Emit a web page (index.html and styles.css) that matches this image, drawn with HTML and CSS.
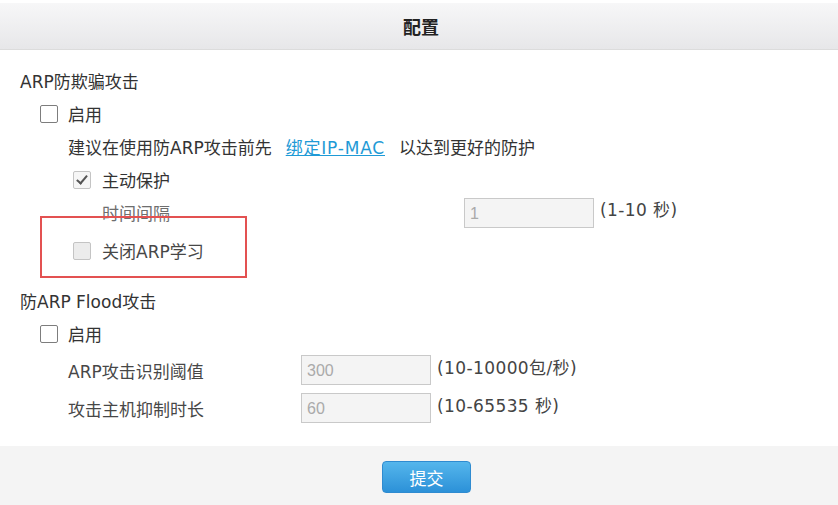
FILE: index.html
```html
<!DOCTYPE html>
<html lang="zh-CN">
<head>
    <meta charset="UTF-8">
    <title>配置</title>
    <link rel="stylesheet" href="styles.css">
</head>
<body>
    <div class="page">
        <div class="header">配置</div>

        <div class="content">
            <div class="row title">ARP防欺骗攻击</div>
            <div class="row lv1">
                <span class="box"></span>
                <span>启用</span>
            </div>
            <div class="row lv1-text">
                建议在使用防ARP攻击前先
                <a class="link" href="#">绑定IP-MAC</a>
                以达到更好的防护
            </div>
            <div class="row lv2">
                <span class="box checked disabled"></span>
                <span>主动保护</span>
            </div>
            <div class="row lv2-text field">
                <span class="label gray w-time">时间间隔</span>
                <input class="input" type="text" value="1" disabled>
                <span class="hint">(1-10 秒)</span>
            </div>
            <div class="row lv2 learn">
                <span class="box disabled"></span>
                <span class="soft">关闭ARP学习</span>
            </div>

            <div class="row title flood">防ARP Flood攻击</div>
            <div class="row lv1">
                <span class="box"></span>
                <span>启用</span>
            </div>
            <div class="row lv1-text field tall first">
                <span class="label soft w-flood">ARP攻击识别阈值</span>
                <input class="input" type="text" value="300" disabled>
                <span class="hint">(10-10000包/秒)</span>
            </div>
            <div class="row lv1-text field tall">
                <span class="label soft w-flood">攻击主机抑制时长</span>
                <input class="input" type="text" value="60" disabled>
                <span class="hint">(10-65535 秒)</span>
            </div>

            <!-- 标注框 -->
            <div class="mark"></div>
        </div>

        <div class="footer">
            <button class="btn" type="button">提交</button>
        </div>
    </div>
</body>
</html>
```

FILE: styles.css
```css
body {
    margin: 0;
    font-family: "DejaVu Sans", "Noto Sans CJK SC", sans-serif;
    font-size: 17px;
    color: #333;
    background: #fff;
}

.page {
    width: 838px;
    height: 505px;
    padding-top: 3px;
    box-sizing: border-box;
    display: flex;
    flex-direction: column;
}

.header {
    height: 46px;
    line-height: 46px;
    text-align: center;
    font-family: "Noto Sans CJK SC", sans-serif;
    font-size: 18px;
    font-weight: bold;
    color: #222;
    background: linear-gradient(#f7f7f8, #e7e7e9);
    border-bottom: 1px solid #dcdcdc;
    padding-left: 4px;
}

.content {
    position: relative;
    flex: 1;
    padding: 14px 0 0 20px;
}

.row {
    display: flex;
    align-items: center;
    height: 33px;
    white-space: nowrap;
}

.title {
    color: #333;
}

.flood {
    margin-top: 17px;
}

.lv1 {
    padding-left: 20px;
}

.lv1-text {
    padding-left: 48px;
}

.lv2 {
    padding-left: 53px;
}

.lv2-text {
    padding-left: 82px;
}

.lv1 .box {
    margin-right: 10px;
}

.lv2 .box {
    margin-right: 11px;
}

.learn {
    margin-top: 5px;
}

.tall {
    height: 38px;
}

.tall.first {
    margin-top: 1px;
}

.box {
    width: 18px;
    height: 18px;
    box-sizing: border-box;
    border: 1.5px solid #7d7d7d;
    border-radius: 2px;
    background: #fff;
    position: relative;
    flex: none;
}

.box.disabled {
    border-color: #c4c4c4;
    background: #ececec;
}

.box.checked::after {
    content: '';
    position: absolute;
    left: 5px;
    top: 1px;
    width: 4px;
    height: 9px;
    border: solid #555;
    border-width: 0 2px 2px 0;
    transform: rotate(40deg);
}

.box.checked.disabled {
    background: #f6f6f6;
}

.link {
    color: #1e9ad6;
    margin: 0 14px;
    letter-spacing: 0.8px;
}

.label {
    display: inline-block;
}

.w-time {
    width: 362px;
}

.w-flood {
    width: 233px;
}

.gray {
    color: #6e6e6e;
}

.soft {
    color: #474747;
}

.input {
    width: 130px;
    height: 30px;
    box-sizing: border-box;
    border: 1px solid #c9c9c9;
    background: #f4f4f4;
    color: #aaa;
    font-family: "Liberation Sans", sans-serif;
    font-size: 16px;
    padding: 2px 5px 0;
    margin: 0;
}

.hint {
    margin-left: 6px;
    margin-top: -8px;
    color: #444;
    letter-spacing: 0.4px;
}

.mark {
    position: absolute;
    left: 40px;
    top: 166px;
    width: 207px;
    height: 62px;
    box-sizing: border-box;
    border: 2px solid #e35151;
}

.footer {
    height: 59px;
    background: #f4f4f4;
    display: flex;
    justify-content: center;
    align-items: flex-start;
    padding-left: 15px;
}

.btn {
    margin-top: 15px;
    width: 89px;
    height: 32px;
    border: 1px solid #2f8bd0;
    border-radius: 4px;
    background: linear-gradient(#55b6ec, #2c91d8);
    color: #fff;
    font-family: "Noto Sans CJK SC", sans-serif;
    font-size: 17px;
    padding: 0;
}
```
